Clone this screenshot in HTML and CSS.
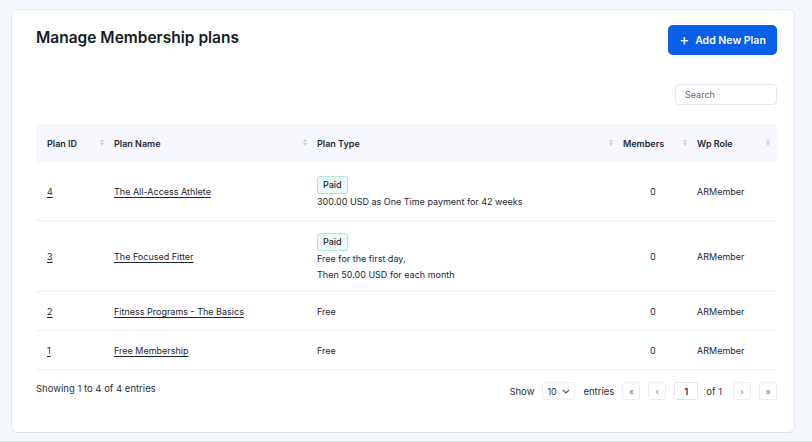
FILE: index.html
```html
<!DOCTYPE html>
<html lang="en">
<head>
    <meta charset="UTF-8">
    <meta name="viewport" content="width=device-width, initial-scale=1.0">
    <title>Manage Membership plans</title>
    <link rel="stylesheet" href="styles.css">
</head>
<body>
    <div class="page">
        <div class="card">
            <div class="card-head">
                <h1>Manage Membership plans</h1>
                <button class="btn-add"><span class="plus">+</span> Add New Plan</button>
            </div>
            <div class="search-row">
                <input type="text" class="search" placeholder="Search">
            </div>
            <table class="plans">
                <thead>
                    <tr>
                        <th class="col-id">Plan ID <span class="sort"></span></th>
                        <th class="col-name">Plan Name <span class="sort"></span></th>
                        <th class="col-type">Plan Type <span class="sort"></span></th>
                        <th class="col-members">Members <span class="sort"></span></th>
                        <th class="col-role">Wp Role <span class="sort"></span></th>
                    </tr>
                </thead>
                <tbody>
                    <tr class="row-paid">
                        <td><a href="#">4</a></td>
                        <td><a href="#">The All-Access Athlete</a></td>
                        <td>
                            <span class="badge">Paid</span>
                            <div class="type-text">300.00 USD as One Time payment for 42 weeks</div>
                        </td>
                        <td class="num">0</td>
                        <td>ARMember</td>
                    </tr>
                    <tr class="row-paid">
                        <td><a href="#">3</a></td>
                        <td><a href="#">The Focused Fitter</a></td>
                        <td>
                            <span class="badge">Paid</span>
                            <div class="type-text">Free for the first day,</div>
                            <div class="type-text">Then 50.00 USD for each month</div>
                        </td>
                        <td class="num">0</td>
                        <td>ARMember</td>
                    </tr>
                    <tr>
                        <td><a href="#">2</a></td>
                        <td><a href="#">Fitness Programs - The Basics</a></td>
                        <td>Free</td>
                        <td class="num">0</td>
                        <td>ARMember</td>
                    </tr>
                    <tr>
                        <td><a href="#">1</a></td>
                        <td><a href="#">Free Membership</a></td>
                        <td>Free</td>
                        <td class="num">0</td>
                        <td>ARMember</td>
                    </tr>
                </tbody>
            </table>
            <div class="table-foot">
                <div class="info">Showing 1 to 4 of 4 entries</div>
                <div class="paging">
                    <span>Show</span>
                    <div class="length">10
                        <svg width="8" height="5" viewBox="0 0 8 5"><path d="M1 1l3 3 3-3" fill="none" stroke="#4a5060" stroke-width="1.1"/></svg>
                    </div>
                    <span>entries</span>
                    <button class="pg">&laquo;</button>
                    <button class="pg">&lsaquo;</button>
                    <div class="pg-current">1</div>
                    <span class="of">of 1</span>
                    <button class="pg">&rsaquo;</button>
                    <button class="pg">&raquo;</button>
                </div>
            </div>
        </div>
    </div>
    <div class="edge"></div>
</body>
</html>
```

FILE: styles.css
```css
body {
    margin: 0;
    background-color: #f5f8fd;
    font-family: 'Inter', 'Noto Sans', sans-serif;
    color: #1f2533;
}
.page {
    padding: 9px 17px 0 11px;
}
.card {
    background-color: #ffffff;
    border: 1px solid #e3eaf3;
    border-bottom-color: #dfe3ea;
    border-radius: 6px;
    padding: 15px 17px 32px 24px;
}
.card-head {
    display: flex;
    justify-content: space-between;
    align-items: flex-start;
}
h1 {
    margin: 3px 0 0 0;
    font-size: 15.5px;
    font-weight: 600;
    color: #161b28;
}
.btn-add {
    height: 30px;
    width: 109px;
    border: none;
    border-radius: 5px;
    background-color: #0a5fea;
    color: #ffffff;
    font-family: inherit;
    font-size: 10.5px;
    font-weight: 600;
    display: flex;
    align-items: center;
    justify-content: center;
    gap: 6px;
    padding: 0;
}
.btn-add .plus {
    font-size: 15px;
    font-weight: 400;
    line-height: 1;
    margin-top: -2px;
}
.search-row {
    display: flex;
    justify-content: flex-end;
    margin-top: 29px;
}
.search {
    width: 102px;
    height: 21px;
    box-sizing: border-box;
    border: 1px solid #e5e8ee;
    border-radius: 4px;
    padding: 0 9px;
    font-family: inherit;
    font-size: 9px;
    color: #333;
}
.search::placeholder {
    color: #5f6573;
}
.plans {
    width: 100%;
    margin-top: 19px;
    border-collapse: collapse;
    table-layout: fixed;
    font-size: 9px;
}
.plans th {
    position: relative;
    height: 39px;
    padding: 0 0 0 3px;
    background-color: #f6f8fd;
    text-align: left;
    font-weight: 600;
    color: #252a37;
}
.plans th.col-id { width: 64px; padding-left: 11px; }
.plans th.col-name { width: 200px; }
.plans th.col-type { width: 303px; }
.plans th.col-members { width: 71px; }
.sort {
    position: absolute;
    right: 7px;
    top: 15px;
    width: 0;
    height: 0;
    border-left: 2.5px solid transparent;
    border-right: 2.5px solid transparent;
    border-bottom: 3px solid #cdd1da;
}
.sort::after {
    content: "";
    position: absolute;
    left: -2.5px;
    top: 4px;
    border-left: 2.5px solid transparent;
    border-right: 2.5px solid transparent;
    border-top: 3px solid #cdd1da;
}
.plans td {
    height: 38px;
    padding: 0 0 0 3px;
    border-bottom: 1px solid #eef0f4;
    color: #1f2533;
    vertical-align: middle;
}
.plans td:first-child {
    padding-left: 11px;
}
.plans tr.row-paid:first-child td { height: 57px; }
.plans tr.row-paid:nth-child(2) td { height: 70px; }
.plans td.num {
    padding-left: 30px;
}
.plans a {
    color: #1f2533;
    text-decoration: underline;
    text-underline-offset: 2px;
}
.badge {
    display: inline-block;
    margin-top: 3px;
    padding: 2px 5px;
    line-height: 12px;
    background-color: #edfaf7;
    border: 1px solid #b3e5dc;
    border-radius: 3px;
    font-weight: 500;
    color: #1f2533;
}
.type-text {
    line-height: 16px;
}
.table-foot {
    display: flex;
    justify-content: space-between;
    align-items: center;
    margin-top: 12px;
    font-size: 9.5px;
    color: #2a2f3c;
}
.info {
    margin-top: -6px;
}
.paging {
    display: flex;
    align-items: center;
    gap: 8px;
}
.length {
    width: 33px;
    height: 18px;
    box-sizing: border-box;
    border: 1px solid #eceef2;
    border-radius: 3px;
    display: flex;
    align-items: center;
    justify-content: space-between;
    padding: 0 4px 0 4px;
    font-size: 9px;
}
.pg {
    width: 18px;
    height: 18px;
    padding: 0;
    border: 1px solid #eceef2;
    border-radius: 3px;
    background-color: #ffffff;
    color: #7a7f8c;
    font-family: inherit;
    font-size: 9px;
    line-height: 1;
}
.pg-current {
    width: 24px;
    height: 18px;
    box-sizing: border-box;
    border: 1px solid #e3e6ec;
    border-radius: 3px;
    display: flex;
    align-items: center;
    justify-content: center;
    font-size: 9.5px;
    font-weight: 600;
}
.of {
    margin: 0 3px 0 0;
}
.edge {
    margin-top: 8px;
    height: 2px;
    background-color: #dcdee2;
}
```
